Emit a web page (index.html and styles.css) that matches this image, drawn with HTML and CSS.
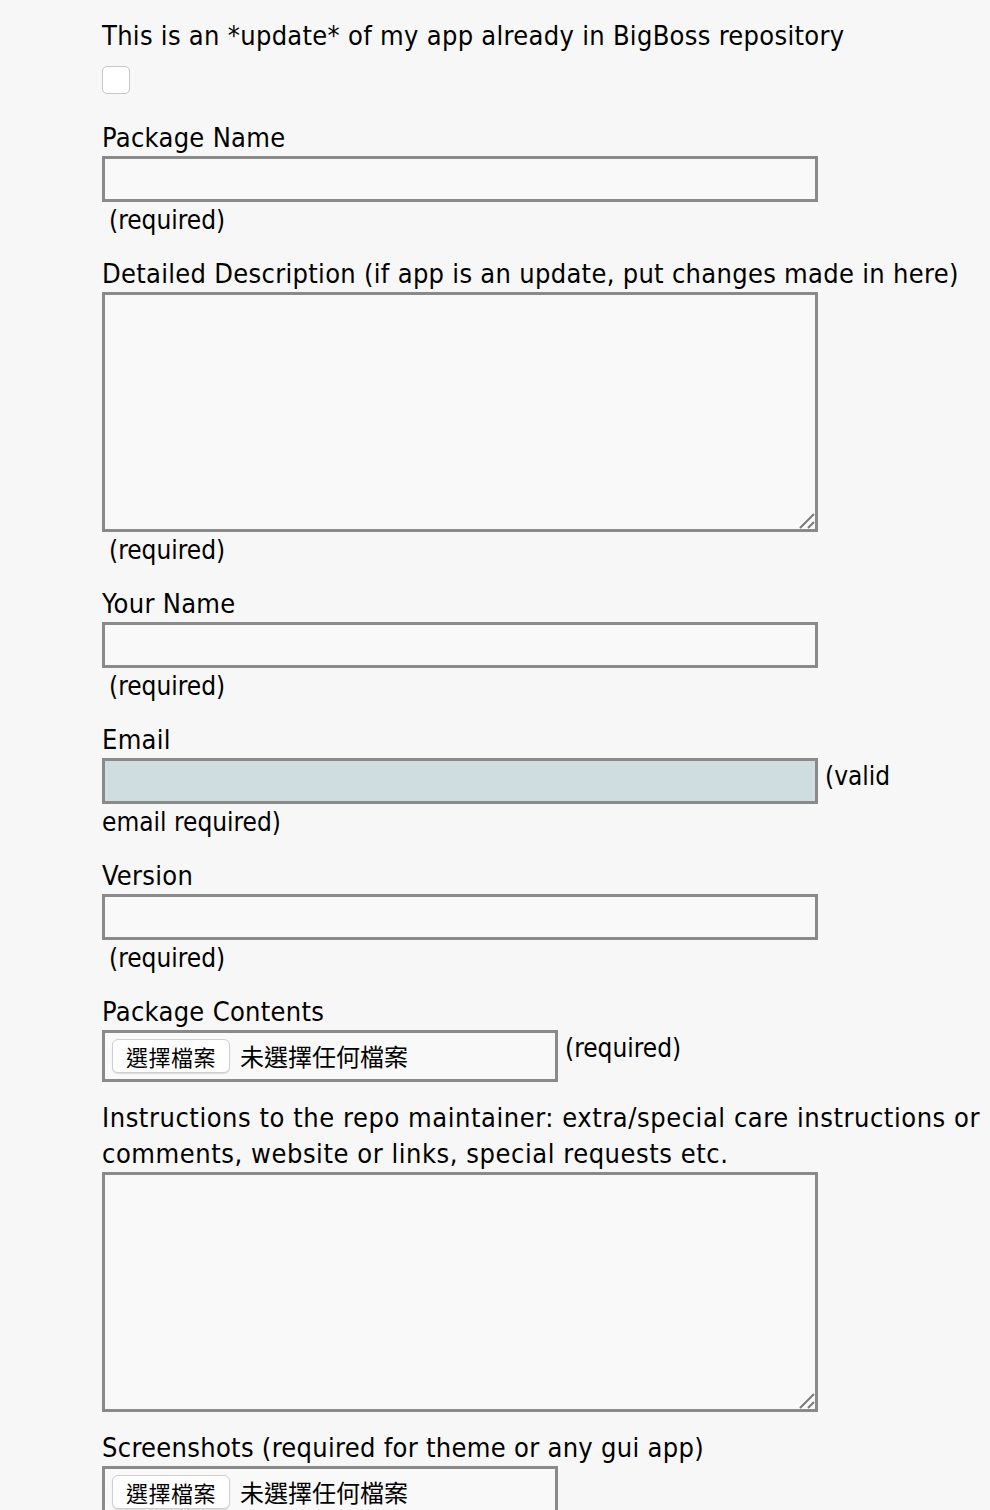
FILE: index.html
```html
<!DOCTYPE html>
<html>
<head>
<meta charset="utf-8">
<link rel="stylesheet" href="styles.css">
</head>
<body>
<form class="form">
  <div class="group">
    <label class="label">This is an *update* of my app already in BigBoss repository</label>
    <input type="checkbox" class="check">
  </div>
  <div class="group">
    <label class="label">Package Name</label>
    <input type="text" class="field">
    <div class="note">(required)</div>
  </div>
  <div class="group">
    <label class="label">Detailed Description (if app is an update, put changes made in here)</label>
    <div class="area-wrap">
      <textarea class="area"></textarea>
      <svg class="grip" width="18" height="18" viewBox="0 0 18 18"><path d="M2 16L16 2M10 16L16 10" stroke="#7a7a7a" stroke-width="2" fill="none"/></svg>
    </div>
    <div class="note">(required)</div>
  </div>
  <div class="group">
    <label class="label">Your Name</label>
    <input type="text" class="field">
    <div class="note">(required)</div>
  </div>
  <div class="group">
    <label class="label">Email</label>
    <div class="row">
      <input type="text" class="field field-email">
      <span class="side">(valid</span>
    </div>
    <div class="note note-flush">email required)</div>
  </div>
  <div class="group">
    <label class="label">Version</label>
    <input type="text" class="field">
    <div class="note">(required)</div>
  </div>
  <div class="group">
    <label class="label">Package Contents</label>
    <div class="row">
      <div class="file">
        <button type="button" class="file-btn">選擇檔案</button>
        <span class="file-text">未選擇任何檔案</span>
      </div>
      <span class="side">(required)</span>
    </div>
  </div>
  <div class="group">
    <label class="label label-wide">Instructions to the repo maintainer: extra/special care instructions or<br>comments, website or links, special requests etc.</label>
    <div class="area-wrap">
      <textarea class="area"></textarea>
      <svg class="grip" width="18" height="18" viewBox="0 0 18 18"><path d="M2 16L16 2M10 16L16 10" stroke="#7a7a7a" stroke-width="2" fill="none"/></svg>
    </div>
  </div>
  <div class="group">
    <label class="label">Screenshots (required for theme or any gui app)</label>
    <div class="row">
      <div class="file">
        <button type="button" class="file-btn">選擇檔案</button>
        <span class="file-text">未選擇任何檔案</span>
      </div>
    </div>
  </div>
</form>
</body>
</html>
```
FILE: styles.css
```css
html, body {
  margin: 0;
  padding: 0;
  background: #f7f7f7;
}
body {
  font-family: "DejaVu Sans Condensed", "DejaVu Sans", "Noto Sans CJK TC", sans-serif;
  font-size: 27px;
  letter-spacing: 0.3px;
  line-height: 36px;
  color: #000;
}
.form {
  padding: 18px 0 0 102px;
  display: flex;
  flex-direction: column;
  gap: 18px;
}
.group {
  display: flex;
  flex-direction: column;
  align-items: flex-start;
}
.label {
  display: block;
  white-space: nowrap;
}
.label-wide {
  letter-spacing: 0.55px;
}
.check {
  -webkit-appearance: none;
  appearance: none;
  width: 28px;
  height: 28px;
  margin: 12px 0 8px 0;
  background: #fff;
  border: 1px solid #c6c6c6;
  border-radius: 5px;
  box-sizing: border-box;
}
.field {
  box-sizing: border-box;
  width: 716px;
  height: 46px;
  margin: 0;
  border: 3px solid #8a8a8a;
  background: #f9f9f9;
  border-radius: 0;
  outline: none;
  padding: 0 6px;
  font: inherit;
}
.field-email {
  background: #cfdce0;
}
.area-wrap {
  position: relative;
  width: 716px;
  height: 240px;
}
.area {
  display: block;
  box-sizing: border-box;
  width: 716px;
  height: 240px;
  margin: 0;
  border: 3px solid #8a8a8a;
  background: #f9f9f9;
  border-radius: 0;
  outline: none;
  font: inherit;
  resize: none;
}
.grip {
  position: absolute;
  left: 696px;
  top: 220px;
}
.note {
  padding-left: 7px;
  letter-spacing: 0;
  font-size: 26px;
}
.note-flush {
  padding-left: 0;
}
.row {
  display: flex;
  align-items: flex-start;
}
.side {
  padding-left: 7px;
  line-height: 36px;
  letter-spacing: 0;
  font-size: 26px;
}
.file {
  box-sizing: border-box;
  width: 456px;
  height: 52px;
  border: 3px solid #8a8a8a;
  background: #f9f9f9;
  display: flex;
  align-items: center;
  padding-left: 7px;
  gap: 10px;
}
.file-btn {
  font-family: "Noto Sans CJK TC", sans-serif;
  font-size: 22px;
  letter-spacing: 0.5px;
  line-height: 28px;
  height: 34px;
  padding: 0 13px;
  margin: 0;
  background: #fff;
  border: 1px solid #cfcfcf;
  border-radius: 6px;
  box-shadow: 0 1px 1px rgba(0,0,0,0.12);
  color: #000;
}
.file-text {
  font-family: "Noto Sans CJK TC", sans-serif;
  font-size: 24px;
  letter-spacing: 0;
  line-height: 34px;
}
```
